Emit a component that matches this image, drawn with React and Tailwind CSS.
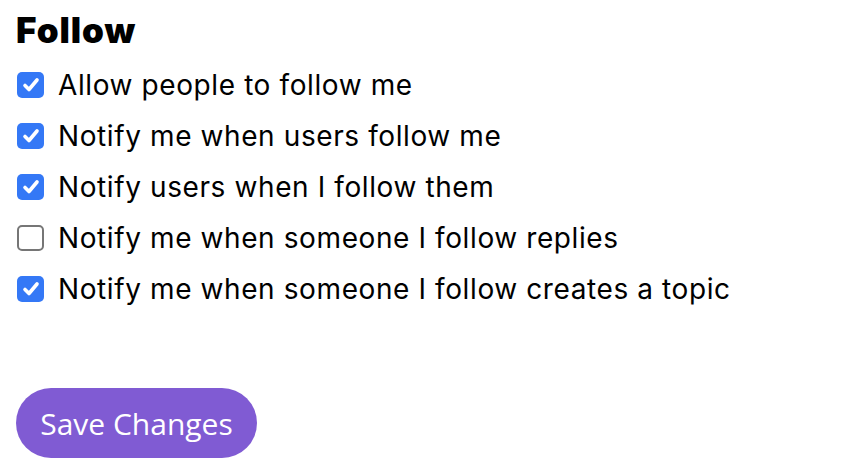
import React from "react";

const items = [
  ["Allow people to follow me", true],
  ["Notify me when users follow me", true],
  ["Notify users when I follow them", true],
  ["Notify me when someone I follow replies", false],
  ["Notify me when someone I follow creates a topic", true],
];

function Box({ checked }) {
  if (checked) {
    return (
      <span className="flex h-[26px] w-[27px] shrink-0 items-center justify-center rounded-[5px] bg-[#3478f6]">
        <svg width="20" height="20" viewBox="0 0 20 20" fill="none">
          <path d="M4 10.5 L8 14.5 L16 5" stroke="white" strokeWidth="3.6" strokeLinecap="round" strokeLinejoin="round" />
        </svg>
      </span>
    );
  }
  return <span className="block h-[26px] w-[27px] shrink-0 rounded-[5px] border-2 border-[#767676] bg-white" />;
}

export default function App() {
  return (
    <div className="min-h-[474px] bg-white px-4 pt-[8px] text-black" style={{ fontFamily: "Inter, 'Liberation Sans', sans-serif" }}>
      <h1 className="text-[35px] font-black leading-[44px] tracking-[0.9px]">Follow</h1>
      <div className="mt-[16px] flex flex-col gap-[17px]">
        {items.map(([t, c]) => (
          <label key={t} className="flex h-[34px] items-center gap-[14px] pl-[1px] text-[28px] leading-[34px] tracking-[0.6px]">
            <Box checked={c} />
            <span>{t}</span>
          </label>
        ))}
      </div>
      <button className="mt-[82px] h-[70px] w-[241px] rounded-full bg-[#805bd3] text-[30px] text-white" style={{ fontFamily: "'Open Sans', sans-serif" }}>
        Save Changes
      </button>
    </div>
  );
}
